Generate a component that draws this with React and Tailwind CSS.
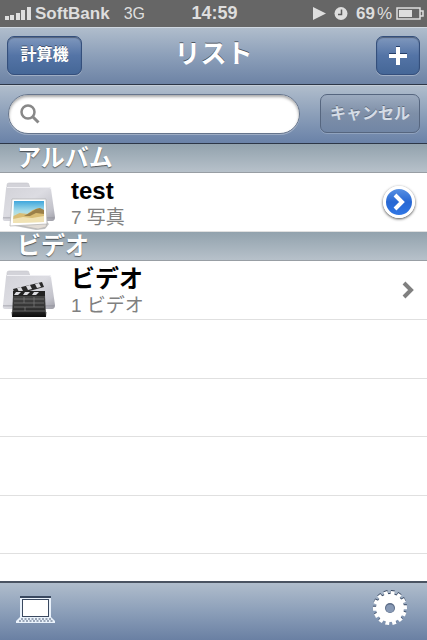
import React, { useState } from "react";

const emptyRows = [1, 2, 3, 4, 5];

const gearTeeth = Array.from({ length: 14 }, (_, i) => (i * 360) / 14);

const FolderIcon = ({ type }) => (
  <svg viewBox="0 0 56 56" className="w-14 h-14 shrink-0" aria-hidden="true">
    <defs>
      <linearGradient id={`folder-${type}`} x1="0" y1="0" x2="1" y2="1">
        <stop offset="0" stopColor="#d2d2d8" />
        <stop offset="0.45" stopColor="#dcdce2" />
        <stop offset="0.8" stopColor="#c2c2ca" />
        <stop offset="1" stopColor="#9c9ca5" />
      </linearGradient>
      <linearGradient id={`photo-${type}`} x1="0" y1="0" x2="0" y2="1">
        <stop offset="0" stopColor="#3fa6dc" />
        <stop offset="0.45" stopColor="#a5dcea" />
        <stop offset="1" stopColor="#f0e6b8" />
      </linearGradient>
      <linearGradient id={`clap-${type}`} x1="0" y1="0" x2="0" y2="1">
        <stop offset="0" stopColor="#444" />
        <stop offset="0.6" stopColor="#333" />
        <stop offset="1" stopColor="#0c0c0c" />
      </linearGradient>
    </defs>
    <path d="M7 14v-3q0-2 2-2h18q2 0 2 2l1 3z" fill="#d3d3d9" stroke="#c4c4cb" strokeWidth="0.6" />
    <path d="M7 13h42q2 0 2 2l4 28q0 4-3 4H5q-3 0-2-4l3-28q0-2 1-2z" fill={`url(#folder-${type})`} />
    <path d="M7 13.500h42q2 0 2 2" fill="none" stroke="#f0f0f4" />
    <path d="M3 43h51.500l.3 1.500H3z" fill="#8a8a93" opacity="0.4" />
    {type === "photo" ? (
      <>
        <path d="M10 51l37-3 2 2-4 5-9 1z" fill="#777" opacity="0.45" />
        <path d="M12 50l35-3-1 6-8 2z" fill="#e3ddd6" stroke="#aaa" strokeWidth="0.5" />
        <path d="M12 25h34l1 25-37 2z" fill="#fff" stroke="#b0b0b0" strokeWidth="0.7" />
        <path d="M14 27h30v21l-31 1z" fill={`url(#photo-${type})`} />
        <path d="M13.500 42l6-3 8 1 5-4 6-2 5.500 2v8l-31 3z" fill="#d9bd75" />
        <path d="M24 42l7-4 5-3 4-1 4 2v4l-8-1-6 3z" fill="#9b8048" />
        <path d="M13 45l10-2 9 1 12-2v6l-31 1z" fill="#f0e2b4" />
      </>
    ) : (
      <>
        <path d="M11 50h36l-1 5H12z" fill="#000" opacity="0.3" />
        <path d="M13 33h32l1 22H12z" fill={`url(#clap-${type})`} />
        <path d="M13 27l29-7 2 5-29 8z" fill="#2a2a2a" />
        <path d="M17 26l4-1 2 4-4 1zM26 24l4-1 2 4-4 1zM35 22l4-1 2 4-4 1z" fill="#dcdce0" />
        <path d="M13 29h32v5H13z" fill="#222" />
        <path d="M16 30h5l-3 3h-4zM25 30h5l-3 3h-4zM34 30h5l-3 3h-4z" fill="#dcdce0" />
        <path d="M14 37h30M14 41h30M14 45h30M13 49h32M24 35v6M34 35v10M25 45v4" stroke="#777" strokeWidth="0.8" fill="none" />
      </>
    )}
  </svg>
);

const StatusBar = () => (
  <div className="grid grid-cols-[1fr_auto_1fr] items-center h-[27px] pl-[5px] pr-[3px] bg-[#666] text-[#dedede] text-[17px] leading-[27px] font-bold">
    <div className="flex items-center">
      <svg viewBox="0 0 26 13" className="w-[26px] h-[13px] mr-1" fill="#dedede" aria-hidden="true">
        <path d="M0 9h4v4H0zM5 8h4v5H5zM11 6h4v7h-4zM16 3h4v10h-4zM22 0h4v13h-4z" />
      </svg>
      <span>SoftBank</span>
      <span className="ml-3.5 font-normal text-[16px]">3G</span>
    </div>
    <span className="text-[18px]">14:59</span>
    <div className="flex items-center justify-end">
      <svg viewBox="0 0 13 14" className="w-[13px] h-3.5 mr-2" aria-hidden="true">
        <path d="M0 0l13 6.500L0 13z" fill="#dedede" />
      </svg>
      <svg viewBox="0 0 14 14" className="w-3.5 h-3.5 mr-2" aria-hidden="true">
        <circle cx="7" cy="6.500" r="6.500" fill="#dedede" />
        <path d="M7.500 2.500v5H4" fill="none" stroke="#5a5a5a" strokeWidth="1.500" />
      </svg>
      <span>69</span>
      <span className="ml-0.5 mr-1 font-normal">%</span>
      <svg viewBox="0 0 28 14" className="w-7 h-3.5" aria-hidden="true">
        <path d="M1 1h23v11H1z" fill="none" stroke="#dedede" strokeWidth="1.500" />
        <path d="M3 3h13v7H3z" fill="#dedede" />
        <path d="M24 4h3v5h-3" fill="none" stroke="#dedede" strokeWidth="1.500" />
      </svg>
    </div>
  </div>
);

const SectionHeader = ({ title }) => (
  <h2 className="h-[29px] pl-[17px] border-b border-[#989ea4] bg-linear-to-b from-[#92a2ad] to-[#b7c1ca] text-white text-[24px] leading-[28px] font-bold [text-shadow:0_1px_1px_rgba(0,0,0,0.55)]">
    {title}
  </h2>
);

const AlbumRow = ({ type, name, count, children }) => (
  <li className="flex items-center h-[59px] border-b border-[#e0e0e0] pr-3">
    <FolderIcon type={type} />
    <div className="flex-1 ml-[15px] pt-0.5">
      <p className="text-[24px] leading-[28px] font-bold text-black">{name}</p>
      <p className="text-[19px] leading-[25px] text-[#808080]">{count}</p>
    </div>
    {children}
  </li>
);

const App = () => {
  const [search, setSearch] = useState("");

  return (
    <div className="flex flex-col h-screen overflow-hidden bg-white font-['Liberation_Sans','Noto_Sans_CJK_JP',sans-serif]">
      <StatusBar />

      {/* Navigation bar */}
      <header className="grid grid-cols-[1fr_auto_1fr] items-center h-[58px] px-[7px] pb-0.5 border-t border-b border-t-[#d0d8e1] border-b-[#2d3748] bg-linear-to-b from-[#b0bdcc] via-[#8c9fb9] to-[#6d83a5] text-white">
        <button className="justify-self-start w-[75px] h-[39px] rounded-[7px] border border-[#344f7c] bg-linear-to-b from-[#8098bd] via-[#5474a6] to-[#456797] text-[16px] leading-[36px] font-bold [text-shadow:0_-1px_0_rgba(0,0,0,0.4)] shadow-[0_1px_0_rgba(255,255,255,0.3),inset_0_1px_1px_rgba(0,0,0,0.35)]">
          計算機
        </button>
        <h1 className="text-[26px] leading-[48px] font-bold pb-0.5 [text-shadow:0_-1px_0_rgba(0,0,0,0.5)]">リスト</h1>
        <button
          aria-label="追加"
          className="justify-self-end flex items-center justify-center w-11 h-[39px] pt-0.5 rounded-[7px] border border-[#344f7c] bg-linear-to-b from-[#8098bd] via-[#5474a6] to-[#456797] shadow-[0_1px_0_rgba(255,255,255,0.3),inset_0_1px_1px_rgba(0,0,0,0.35)]"
        >
          <svg viewBox="0 0 18 20" className="w-[18px] h-5" aria-hidden="true">
            <path d="M7 0h4v7h7v4h-7v7H7v-7H0V7h7z" fill="#263f6a" />
            <path d="M7 1h4v7h7v4h-7v7H7v-7H0V8h7z" fill="#fff" />
          </svg>
        </button>
      </header>

      {/* Search bar */}
      <div className="flex items-center gap-5 h-[59px] pl-2 pr-[7px] pb-0.5 border-t border-b border-t-[#c4cdd8] border-b-[#2d3748] bg-linear-to-b from-[#b0bdcc] via-[#8c9fb9] to-[#6a82a8]">
        <label className="flex flex-1 min-w-0 items-center h-10 pl-[11px] pr-4 rounded-full border border-[#66758c] bg-white shadow-[inset_0_2px_3px_rgba(0,0,0,0.35),0_1px_0_rgba(255,255,255,0.3)]">
          <svg viewBox="0 0 20 20" className="w-5 h-5 shrink-0" fill="none" stroke="#888" aria-hidden="true">
            <circle cx="8" cy="8" r="6.500" strokeWidth="2.500" />
            <path d="M12.500 12.500l6 6" strokeWidth="3" />
          </svg>
          <input
            type="search"
            aria-label="検索"
            value={search}
            onChange={(e) => setSearch(e.target.value)}
            className="flex-1 min-w-0 ml-2 bg-transparent text-[18px] outline-none"
          />
        </label>
        <button
          onClick={() => setSearch("")}
          className="w-[100px] h-[39px] rounded-[7px] border border-[#56667f] bg-linear-to-b from-[#9cabbf] via-[#7e8fa8] to-[#7186a5] text-[#d5dce6] text-[16px] leading-[36px] font-bold [text-shadow:0_-1px_0_rgba(0,0,0,0.3)] shadow-[0_1px_0_rgba(255,255,255,0.2)]"
        >
          キャンセル
        </button>
      </div>

      <main className="flex-1 min-h-0 overflow-hidden">
        <SectionHeader title="アルバム" />
        <ul>
          <AlbumRow type="photo" name="test" count="7 写真">
            <button aria-label="詳細" className="flex items-center justify-center w-8 h-8 rounded-full border-[3px] border-white bg-linear-to-b from-[#5790e3] via-[#2767d3] to-[#2f76e5] shadow-[0_1px_3px_rgba(0,0,0,0.7)]">
              <svg viewBox="0 0 14 18" className="w-3.5 h-[18px]" fill="none" stroke="#fff" strokeWidth="4" aria-hidden="true">
                <path d="M3 2l7 7-7 7" />
              </svg>
            </button>
          </AlbumRow>
        </ul>
        <SectionHeader title="ビデオ" />
        <ul>
          <AlbumRow type="video" name="ビデオ" count="1 ビデオ">
            <svg viewBox="0 0 14 18" className="w-3.5 h-[18px]" fill="none" stroke="#808080" strokeWidth="4" aria-hidden="true">
              <path d="M3 2l7 7-7 7" />
            </svg>
          </AlbumRow>
          {emptyRows.map((row) => (
            <li key={row} className="h-[59px] odd:h-[58px] border-b border-[#e0e0e0]" />
          ))}
        </ul>
      </main>

      {/* Toolbar */}
      <footer className="flex items-center justify-between h-[59px] pl-4 pr-[19px] pb-1 border-t-2 border-[#4a5361] bg-linear-to-b from-[#b0bdcc] via-[#8c9fb9] to-[#6a80a3]">
        <button aria-label="コンピュータ">
          <svg viewBox="0 0 40 28" className="w-10 h-7" aria-hidden="true">
            <path d="M4 0h31v2H4z" fill="#39485f" />
            <path d="M4 2h31v19H4z" fill="#eaf2fb" />
            <path d="M6 3h27v18H6z" fill="#39485f" />
            <path d="M7 4h25v16H7z" fill="#fff" />
            <path d="M4 21h31l4 4v2H0v-2z" fill="#eaf2fb" />
            <path d="M5 23h30M3 25h34" stroke="#4a5b76" strokeWidth="1.200" strokeDasharray="2 1.500" />
          </svg>
        </button>
        <button aria-label="設定" className="pb-1">
          <svg viewBox="-18 -18 36 36" className="w-9 h-9" aria-hidden="true">
            {["#394963", "#fff"].map((color, i) => (
              <g key={color} fill={color} transform={`translate(0 ${i - 1})`}>
                {gearTeeth.map((angle) => (
                  <path key={angle} d="M-2-13v-4h4v4z" transform={`rotate(${angle + 10})`} />
                ))}
                <circle r="14" />
              </g>
            ))}
            <circle r="5" fill="#5b6c87" />
            <circle cy="0.500" r="4" fill="#8799b5" />
          </svg>
        </button>
      </footer>
    </div>
  );
};

export default App;
